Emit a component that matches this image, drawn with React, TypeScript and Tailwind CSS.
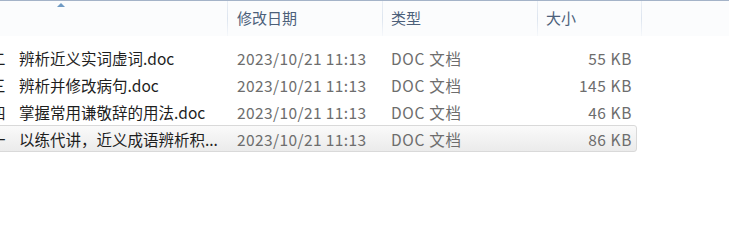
import React from "react";

const rows = [
  { pre: "二", name: "辨析近义实词虚词.doc", size: "55 KB" },
  { pre: "三", name: "辨析并修改病句.doc", size: "145 KB" },
  { pre: "四", name: "掌握常用谦敬辞的用法.doc", size: "46 KB" },
  { pre: "一", name: "以练代讲，近义成语辨析积...", size: "86 KB", sel: true },
];

function Sep() {
  return <div className="w-px h-full bg-gradient-to-b from-[#e9eef5] via-[#dde5ef] to-[#f6f8fb]" />;
}

export default function App() {
  return (
    <div
      className="w-[729px] h-[243px] bg-white overflow-hidden relative"
      style={{ fontFamily: '"Noto Sans CJK SC", "Noto Sans", sans-serif' }}
    >
      <div className="h-px bg-[#a4b3c8]" />
      <div className="h-[35px] bg-[#fbfcfd] flex items-stretch relative text-[15px] text-[#4c607a]">
        <div className="absolute left-[57px] top-[2px] w-0 h-0 border-l-[4px] border-r-[4px] border-b-[4px] border-l-transparent border-r-transparent border-b-[#6f9ac4]" />
        <div className="w-[227px]" />
        <Sep />
        <div className="w-[154px] pl-[9px] flex items-center pb-[1px]">修改日期</div>
        <Sep />
        <div className="w-[154px] pl-[8px] flex items-center pb-[1px]">类型</div>
        <Sep />
        <div className="w-[103px] pl-[8px] flex items-center pb-[1px]">大小</div>
        <Sep />
      </div>
      <div className="pt-[8px] flex flex-col">
        {rows.map((r, i) => (
          <div
            key={i}
            className={
              "h-[27px] -ml-[4px] w-[641px] flex items-center rounded-[3px] border text-[15.5px] pt-[2px] " +
              (r.sel
                ? "border-[#d9d9d9] bg-gradient-to-b from-[#fafafa] to-[#ebebeb]"
                : "border-transparent")
            }
          >
            <div className="w-[22px] overflow-hidden shrink-0 text-[#1e1e1e]">
              <span className="block -ml-[7px]">{r.pre}</span>
            </div>
            <div className="w-[209px] shrink-0 text-[#1e1e1e] whitespace-nowrap overflow-hidden">{r.name}</div>
            <div className="w-[155px] shrink-0 pl-[9px] text-[#6d6d6d] whitespace-nowrap tracking-[0.4px]">2023/10/21 11:13</div>
            <div className="w-[155px] shrink-0 pl-[8px] text-[#6d6d6d] whitespace-nowrap tracking-[0.7px]">DOC 文档</div>
            <div className="w-[94px] shrink-0 text-right text-[#6d6d6d] whitespace-nowrap tracking-[0.6px]">{r.size}</div>
          </div>
        ))}
      </div>
    </div>
  );
}
